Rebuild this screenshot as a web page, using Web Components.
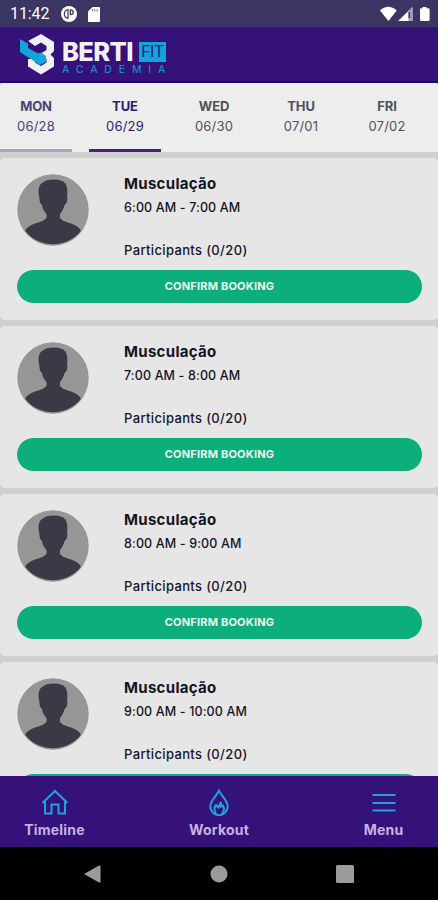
<!DOCTYPE html>
<html lang="en">
<head>
<meta charset="utf-8">
<title>Berti Fit Academia</title>
<style>
  body { margin: 0; font-family: Inter, Roboto, "Liberation Sans", sans-serif; }
</style>
</head>
<body>
<gym-app></gym-app>
<script>
const define = (name, html, setup) => {
  const tpl = document.createElement('template');
  tpl.innerHTML = html;
  customElements.define(name, class extends HTMLElement {
    constructor() {
      super();
      this.attachShadow({ mode: 'open' }).appendChild(tpl.content.cloneNode(true));
    }
    connectedCallback() { if (setup) setup(this, this.shadowRoot); }
  });
};

define('status-bar', `
<style>
  :host { display: flex; align-items: center; height: 27px; background: #3a3563; color: #fff; box-sizing: border-box; padding: 1px 8px 0 10px; font: 400 16px/26px Roboto, sans-serif; }
  .time { width: 51px; letter-spacing: -.1px; }
  svg { display: block; }
  .sd { margin-left: 11px; }
  .right { margin-left: auto; }
</style>
<span class="time">11:42</span>
<svg width="16" height="16" viewBox="0 0 16 16"><circle cx="8" cy="8" r="8" fill="#fff"/><path d="M7 12.800V3.500Q3.300 4.500 3.300 8T7 12.500M9.300 3.800Q12.300 4 12.300 6.200T9.300 8.600Z" fill="none" stroke="#3a3563" stroke-width="1.200"/></svg>
<svg class="sd" width="12" height="15" viewBox="0 0 12 15"><path d="M4.500 0H11a1 1 0 0 1 1 1v13a1 1 0 0 1-1 1H1a1 1 0 0 1-1-1V4.500Z" fill="#fff"/><path d="M4.400 2.200v2.200M6.800 2.200v2.200M9.200 2.200v2.200" stroke="#3a3563" stroke-width=".8"/></svg>
<svg class="right" width="50" height="16" viewBox="0 0 50 16"><path d="M0 4.400Q8.200-3 16.800 4.400L8.400 15Z" fill="#fff"/><path d="M32.500 1v14H18Z" fill="#fff"/><path d="M28.500 4.800 32.500 1V15H28.500Z" fill="#9f9cb4"/><path d="M29.200 6v6" stroke="#302a5c" stroke-width="1.300"/><path d="M42.500 1h4v1.200h1.900q1.200 0 1.200 1.200v10.300q0 1.300-1.200 1.300h-7.200q-1.200 0-1.200-1.300V3.400q0-1.200 1.200-1.200h1.300Z" fill="#fff"/></svg>`);

define('brand-bar', `
<style>
  :host { display: flex; height: 56px; box-sizing: border-box; padding: 7px 0 0 20px; background: #35117a; border-bottom: 2px solid #1e0470; }
  svg { display: block; flex: none; }
  .words { display: flex; flex-direction: column; padding: 7px 0 0 7px; }
  .row { display: flex; align-items: center; height: 22px; }
  .name { width: 77px; font: 800 25.500px/22px Inter, sans-serif; letter-spacing: -.6px; color: #f2f0f6; }
  .fit { width: 27px; height: 20px; background: #12a5dc; color: #35117a; font: 400 16px/20px Roboto, sans-serif; text-align: center; }
  .sub { font: 500 10.500px/14px Inter, sans-serif; letter-spacing: 6.800px; color: #1b86c8; white-space: nowrap; }
</style>
<svg width="35" height="41" viewBox="0 0 35 41">
  <path d="M8 7 21 0 34 8V17L30.500 20.500 34 24V32.500L21 40.500 8 32.500V25L15 25 15 28.500 21 32 26.500 28.500V25L20 20 26.500 16V12L21 8.500 15 12Z" fill="#f0eff4"/>
  <path d="M0 5 8 9.500V14L18 19.500 21 18.500 26 22V28L20 31 0 18Z" fill="#12a5dc"/>
</svg>
<div class="words">
  <div class="row"><span class="name">BERTI</span><span class="fit">FIT</span></div>
  <span class="sub">ACADEMIA</span>
</div>`);

define('day-tab', `
<style>
  :host { display: flex; flex-direction: column; align-items: center; width: 72px; height: 69px; box-sizing: border-box; padding-top: 13px; border-bottom: 3px solid transparent; color: #50525c; }
  :host([near]) { border-color: #aaa2c6; color: #484477; }
  :host([active]) { border-color: #4b1b86; color: #30206f; }
  b { font-size: 13px; line-height: 20px; font-weight: 700; letter-spacing: -.1px; }
  span { font-size: 13px; line-height: 20px; font-weight: 400; letter-spacing: .2px; white-space: nowrap; }
</style>
<b><slot></slot></b><span><slot name="date"></slot></span>`);

define('day-tabs', `
<style>
  :host { display: flex; gap: 17px; height: 69px; background: #ededee; border-radius: 4px 4px 0 0; }
  ::slotted(:nth-child(4)) { width: 68px; }
  ::slotted(:nth-child(5)) { width: 70px; }
</style>
<slot></slot>`);

define('user-avatar', `
<style>:host { display: block; width: 72px; height: 72px; } svg { display: block; }</style>
<svg width="72" height="72" viewBox="0 0 72 72">
  <circle cx="36" cy="36" r="35.700" fill="#969696"/>
  <path d="M22.500 12Q23.500 9 26 8.500Q29 5.500 37 5.500Q45 5.500 48.500 9.500Q51 13 50 23.500Q51 25 49.500 29L47.500 31Q46 37 43 40V44Q45 47 54 49.500Q62 52 63.800 57A35.700 35.700 0 0 1 8.200 57Q10 52 18 49.500Q27 47 29.500 44V40Q26 37 25 31Q22 29 22.500 24Q20.500 17 22.500 12Z" fill="#393a45"/>
</svg>`);

define('book-button', `
<style>
  :host { display: block; height: 33px; border-radius: 17px; background: #0caf7c; color: #e9f8f1; font-size: 11px; line-height: 32px; font-weight: 700; text-align: center; letter-spacing: .2px; }
</style>
<slot></slot>`);

define('class-card', `
<style>
  :host { display: block; height: 162px; box-sizing: border-box; padding: 16px 16px 0 17px; border-radius: 5px; background: #e6e6e7; color: #15151f; }
  .top { display: flex; gap: 35px; height: 96px; }
  .info { display: flex; flex-direction: column; white-space: nowrap; }
  b { font-size: 15px; line-height: 20px; font-weight: 700; letter-spacing: .3px; }
  .time { font-size: 12.500px; line-height: 20px; font-weight: 500; margin-top: 4px; letter-spacing: .13px; }
  .people { font-size: 13px; line-height: 20px; font-weight: 500; margin-top: 22px; letter-spacing: .36px; }
</style>
<div class="top"><user-avatar></user-avatar>
  <div class="info"><b>Musculação</b><span class="time"><slot></slot></span><span class="people">Participants (0/20)</span></div>
</div>
<book-button></book-button>`,
(host, root) => { root.querySelector('book-button').textContent = host.getAttribute('action') || ''; });

define('class-list', `
<style>
  :host { display: flex; flex-direction: column; gap: 6px; height: 624px; box-sizing: border-box; padding-top: 6px; overflow: hidden; background: #d0d0d1; }
  ::slotted(*) { flex: none; }
</style>
<slot></slot>`);

define('nav-item', `
<style>
  :host { display: flex; flex-direction: column; align-items: center; width: 109px; color: #c4b4e3; font-size: 14px; font-weight: 700; line-height: 20px; letter-spacing: .2px; }
  ::slotted(svg) { display: block; fill: none; stroke: #20a2dc; stroke-width: 2; margin-bottom: 4px; }
</style>
<slot name="icon"></slot><span><slot></slot></span>`);

define('bottom-nav', `
<style>
  :host { display: flex; justify-content: space-between; height: 71px; box-sizing: border-box; padding-top: 13px; background: #35117a; }
</style>
<nav-item><svg slot="icon" width="28" height="27" viewBox="0 0 28 27"><path d="M1.500 14 14 2 26.500 14M4 12.500V24.500H10.500V15.500H17.500V24.500H24V12.500"/></svg>Timeline</nav-item>
<nav-item><svg slot="icon" width="28" height="27" viewBox="0 0 28 27"><path d="M14 1.500C12.500 6 5.300 11 5.300 17.500A8.700 8.700 0 0 0 22.700 17.500C22.700 11 15.500 6 14 1.500Z"/><path d="M11.500 25.500Q7.500 20 11 16L13.200 18.500 16 13V17.500L18 16.500Q20.500 21.500 16.500 25.500"/></svg>Workout</nav-item>
<nav-item><svg slot="icon" width="28" height="27" viewBox="0 0 28 27"><path d="M2.500 6H25.500M2.500 14H25.500M2.500 21.500H25.500"/></svg>Menu</nav-item>`);

define('system-nav', `
<style>
  :host { display: flex; justify-content: space-between; align-items: center; height: 53px; box-sizing: border-box; padding: 0 84px 0 83px; background: #000; }
  svg { display: block; fill: #9b9b9b; }
</style>
<svg width="18" height="18" viewBox="0 0 18 18"><path d="M1 9 16 .5Q17.500 0 17.500 1.500V16.500Q17.500 18 16 17.500Z"/></svg>
<svg width="18" height="18" viewBox="0 0 18 18"><circle cx="9" cy="9" r="8.500"/></svg>
<svg width="18" height="18" viewBox="0 0 18 18"><rect width="18" height="18" rx="1.500"/></svg>`);

define('gym-app', `
<style>
  :host { display: flex; flex-direction: column; width: 438px; height: 900px; overflow: hidden; background: #d0d0d1; }
  :host > * { flex: none; }
</style>
<status-bar></status-bar>
<brand-bar></brand-bar>
<day-tabs>
  <day-tab near>MON<span slot="date">06/28</span></day-tab>
  <day-tab active>TUE<span slot="date">06/29</span></day-tab>
  <day-tab>WED<span slot="date">06/30</span></day-tab>
  <day-tab>THU<span slot="date">07/01</span></day-tab>
  <day-tab>FRI<span slot="date">07/02</span></day-tab>
</day-tabs>
<class-list>
  <class-card action="CONFIRM BOOKING">6:00 AM - 7:00 AM</class-card>
  <class-card action="CONFIRM BOOKING">7:00 AM - 8:00 AM</class-card>
  <class-card action="CONFIRM BOOKING">8:00 AM - 9:00 AM</class-card>
  <class-card>9:00 AM - 10:00 AM</class-card>
</class-list>
<bottom-nav></bottom-nav>
<system-nav></system-nav>`);
</script>
</body>
</html>
